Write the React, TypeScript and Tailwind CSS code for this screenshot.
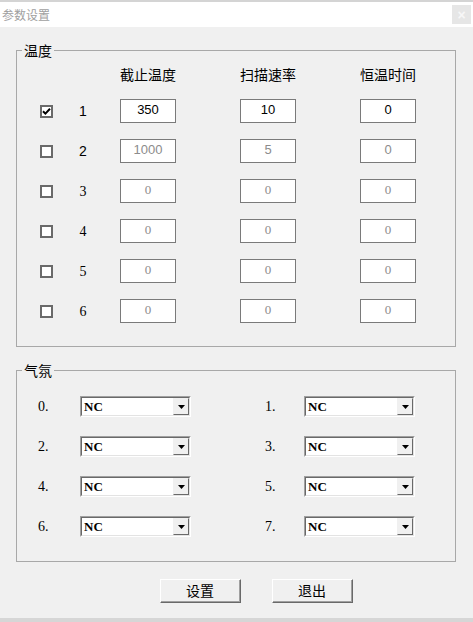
const cjk = "font-['Noto_Sans_CJK_SC','Microsoft_YaHei',sans-serif]";

const tempRows = [
  { n: "1", checked: true, values: ["350", "10", "0"], dim: false, serif: false },
  { n: "2", checked: false, values: ["1000", "5", "0"], dim: true, serif: false },
  { n: "3", checked: false, values: ["0", "0", "0"], dim: true, serif: true },
  { n: "4", checked: false, values: ["0", "0", "0"], dim: true, serif: true },
  { n: "5", checked: false, values: ["0", "0", "0"], dim: true, serif: true },
  { n: "6", checked: false, values: ["0", "0", "0"], dim: true, serif: true },
];

const Checkbox = ({ checked }: { checked: boolean }) => (
  <div className="w-[13px] h-[13px] border-2 border-[#6a6a6a] bg-white flex items-center justify-center">
    {checked && (
      <svg width="9" height="9" viewBox="0 0 9 9">
        <path d="M1 4.2 L3.4 6.6 L8 1.8" stroke="#000" strokeWidth="2" fill="none" />
      </svg>
    )}
  </div>
);

const Field = ({ value, dim, serif }: { value: string; dim: boolean; serif: boolean }) => (
  <div
    className={`w-[56px] h-[24px] border border-[#7a7a7a] bg-white text-center text-[13px] leading-[16px] pt-[2px] ${
      dim ? "text-[#8c8c8c]" : "text-black"
    } ${serif ? "font-['Liberation_Serif',serif]" : "font-['Liberation_Sans',sans-serif]"}`}
  >
    {value}
  </div>
);

const Combo = () => (
  <div className="w-[111px] h-[21px] border border-t-[#a0a0a0] border-l-[#a0a0a0] border-b-white border-r-white">
    <div className="w-full h-full border border-t-[#696969] border-l-[#696969] border-b-[#e3e3e3] border-r-[#e3e3e3] bg-white flex items-center">
      <span className="flex-1 pl-[2px] text-[13px] leading-[15px] font-bold font-['Liberation_Serif',serif] text-black">
        NC
      </span>
      <div className="w-[16px] h-[17px] bg-[#f0f0f0] border border-t-[#f0f0f0] border-l-[#f0f0f0] border-b-[#696969] border-r-[#696969] flex items-center justify-center">
        <svg width="7" height="4" viewBox="0 0 7 4">
          <path d="M0 0 H7 L3.5 4 Z" fill="#000" />
        </svg>
      </div>
    </div>
  </div>
);

const Btn = ({ label }: { label: string }) => (
  <button className="w-[81px] h-[24px] bg-[#f0f0f0] border border-t-white border-l-white border-b-[#696969] border-r-[#696969]">
    <div className={`w-full h-full border-b border-r border-[#a0a0a0] flex items-center justify-center text-[14px] text-black ${cjk}`}>
      {label}
    </div>
  </button>
);

export default function App() {
  return (
    <div className="w-[473px] h-[622px] bg-[#f0f0f0] flex flex-col overflow-hidden">
      {/* title bar */}
      <div className="h-[27px] bg-white border-t-2 border-[#d4d4d4] flex items-center justify-between">
        <span className={`pl-[2px] text-[12px] text-[#a0a0a0] ${cjk}`}>参数设置</span>
        <div className="w-[19px] h-[19px] mr-[2px] bg-[#e6e6e6] flex items-center justify-center text-[14px] leading-none font-bold text-[#f7f7f7] font-['Liberation_Sans',sans-serif]">
          ×
        </div>
      </div>

      <div className="flex-1 flex flex-col">
        {/* 温度 */}
        <fieldset className="ml-[16px] mt-[15px] w-[440px] border border-[#a8a8a8] pt-[8px] pb-[23px]">
          <legend className={`ml-[5px] px-[2px] text-[14px] leading-[16px] text-black ${cjk}`}>温度</legend>
          <div className={`flex text-[14px] leading-[16px] text-black ${cjk}`}>
            <div className="ml-[103px] w-[56px] text-center whitespace-nowrap">截止温度</div>
            <div className="ml-[64px] w-[56px] text-center whitespace-nowrap">扫描速率</div>
            <div className="ml-[64px] w-[56px] text-center whitespace-nowrap">恒温时间</div>
          </div>
          <div className="mt-[17px] flex flex-col gap-[16px]">
            {tempRows.map((r) => (
              <div key={r.n} className="flex items-center h-[24px]">
                <div className="ml-[23px]">
                  <Checkbox checked={r.checked} />
                </div>
                <div
                  className={`ml-[17px] w-[26px] text-center text-[14px] text-black ${
                    r.serif ? "font-['Liberation_Serif',serif]" : "font-['Liberation_Sans',sans-serif]"
                  }`}
                >
                  {r.n}
                </div>
                <div className="ml-[24px]">
                  <Field value={r.values[0]} dim={r.dim} serif={r.serif} />
                </div>
                <div className="ml-[64px]">
                  <Field value={r.values[1]} dim={r.dim} serif={r.serif} />
                </div>
                <div className="ml-[64px]">
                  <Field value={r.values[2]} dim={r.dim} serif={r.serif} />
                </div>
              </div>
            ))}
          </div>
        </fieldset>

        {/* 气氛 */}
        <fieldset className="ml-[16px] mt-[15px] w-[440px] border border-[#a8a8a8] pt-[18px] pb-[24px]">
          <legend className={`ml-[5px] px-[2px] text-[14px] leading-[16px] text-black ${cjk}`}>气氛</legend>
          <div className="flex flex-col gap-[19px]">
            {[0, 2, 4, 6].map((i) => (
              <div key={i} className="flex items-center h-[21px] text-[14px] text-black font-['Liberation_Serif',serif]">
                <div className="ml-[21px] w-[42px]">{i}.</div>
                <Combo />
                <div className="ml-[74px] w-[39px]">{i + 1}.</div>
                <Combo />
              </div>
            ))}
          </div>
        </fieldset>

        <div className="mt-[17px] ml-[160px] flex gap-[31px]">
          <Btn label="设置" />
          <Btn label="退出" />
        </div>
      </div>
      <div className="h-[4px] bg-[#d6d6d6]" />
    </div>
  );
}
